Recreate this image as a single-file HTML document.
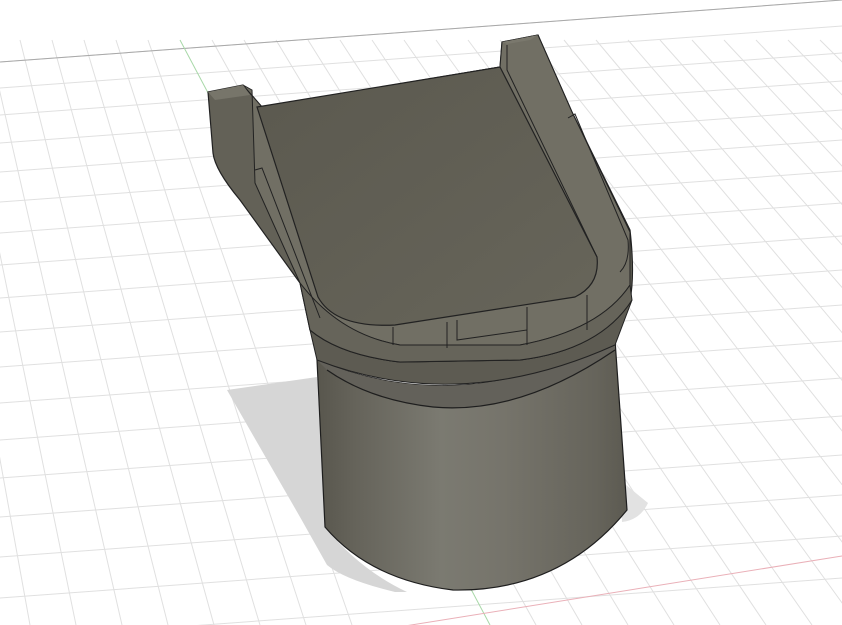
<!DOCTYPE html>
<html><head><meta charset="utf-8"><style>html,body{margin:0;padding:0;background:#fff;width:842px;height:625px;overflow:hidden}</style></head>
<body>
<svg width="842" height="625" viewBox="0 0 842 625" xmlns="http://www.w3.org/2000/svg">
<defs>
<linearGradient id="cyl" x1="0" x2="1" y1="0" y2="0">
<stop offset="0" stop-color="#58564d"/><stop offset="0.12" stop-color="#65635a"/><stop offset="0.4" stop-color="#7b7a71"/><stop offset="0.6" stop-color="#76746b"/><stop offset="0.9" stop-color="#66645b"/><stop offset="1" stop-color="#5c5a51"/>
</linearGradient>
<linearGradient id="fl" x1="0" x2="1" y1="0" y2="1">
<stop offset="0" stop-color="#5b594f"/><stop offset="1" stop-color="#67655a"/>
</linearGradient>
</defs>
<g stroke="#e0e0e0" stroke-width="1" fill="none">
<path d="M0 62 L842 0 M0 88 L842 26 M0 115 L842 53 M0 143 L842 81 M0 172 L842 110 M0 202 L842 140 M0 233 L842 171 M0 265 L842 203 M0 298 L842 236 M0 332 L842 270 M0 367 L842 305 M0 403 L842 341 M0 440 L842 378 M0 478 L842 416 M0 517 L842 455 M0 557 L842 495 M0 598 L842 536 M0 640 L842 578"/>
<path d="M-140 40 L-62 625 M-108 40 L-16 625 M-76 40 L30 625 M-44 40 L76 625 M-12 40 L122 625 M20 40 L168 625 M52 40 L214 625 M84 40 L260 625 M116 40 L306 625 M148 40 L352 625 M212 40 L536 625 M244 40 L582 625 M276 40 L628 625 M308 40 L674 625 M340 40 L720 625 M372 40 L766 625 M404 40 L812 625 M436 40 L858 625 M468 40 L904 625 M500 40 L950 625 M532 40 L996 625 M564 40 L1042 625 M596 40 L1088 625 M628 40 L1134 625 M660 40 L1180 625 M692 40 L1226 625 M724 40 L1272 625 M756 40 L1318 625 M788 40 L1364 625 M820 40 L1410 625"/>
</g>
<path d="M0 62 L842 0" stroke="#a8a8a8" stroke-width="1"/>
<path d="M180 40 L490 625" stroke="#a8d8a8" stroke-width="1"/>
<path d="M280 646 L842 556" stroke="#eab0b8" stroke-width="1"/>
<path d="M227 390 L317 377 L325 527 Q360 570 407 592 L395 592 Q345 580 327 565 L300 517 Z" fill="#d6d6d6"/>
<path d="M620 480 L648 503 Q640 520 622 522 Z" fill="#e2e2e2"/>
<path d="M317 360 Q460 420 615 340 L627 510 Q560 592 453 590 Q370 580 325 527 Z" fill="url(#cyl)" stroke="#1e1e1e" stroke-width="1.2"/>
<path d="M317 360 Q460 420 615 340 L615 350 Q520 415 433 407 Q370 400 327 370 Z" fill="#63615a"/>
<path d="M327 370 Q370 400 433 407 Q520 415 615 350" fill="none" stroke="#1e1e1e" stroke-width="1.2"/>
<path d="M310 330 Q340 355 400 362 L520 360 Q600 350 632 300 L615 345 Q460 415 317 360 Z" fill="#5d5b52" stroke="#222"/>
<path d="M208 92 L243 85 L262 107 L500 67 L502 42 L538 35 L572 112 L630 230 Q635 275 630 300 Q600 350 520 360 L400 362 Q340 355 310 330 L300 283 L240 200 Q215 170 213 153 Z" fill="#636157" stroke="#222" stroke-width="1.2"/>
<path d="M243 85 L252 90 L255 183 L300 283 Q340 335 400 345 L520 345 Q600 330 630 285 L630 232 L572 112 L538 35 L502 42 L500 67 L262 107 Z" fill="#716f64" stroke="#222"/>
<path d="M208 92 L243 85 L250 95 L215 100 Z" fill="#77756a"/>
<path d="M502 42 L538 35 L530 40 L507 44 Z" fill="#7a786d"/>
<path d="M257 107 L500 67 L597 257 Q600 285 575 297 L395 325 Q335 328 318 297 Z" fill="url(#fl)" stroke="#222" stroke-width="1.2"/>
<path d="M300 283 Q340 335 400 345 L520 345 Q600 330 630 285 L632 300 Q600 350 520 360 L400 362 Q340 355 310 330 Z" fill="#66645a" stroke="#222"/>
<path d="M393 327 L393 345 M447 322 L447 348 M457 320 L457 340 L527 330 L527 307 M527 307 L527 345 M587 295 L587 330" fill="none" stroke="#222"/>
<path d="M255 170 L262 168 L320 318 M568 118 L575 114 L628 240 Q630 262 620 272 M507 45 L507 70 L597 257" fill="none" stroke="#222"/>
</svg>
</body></html>
